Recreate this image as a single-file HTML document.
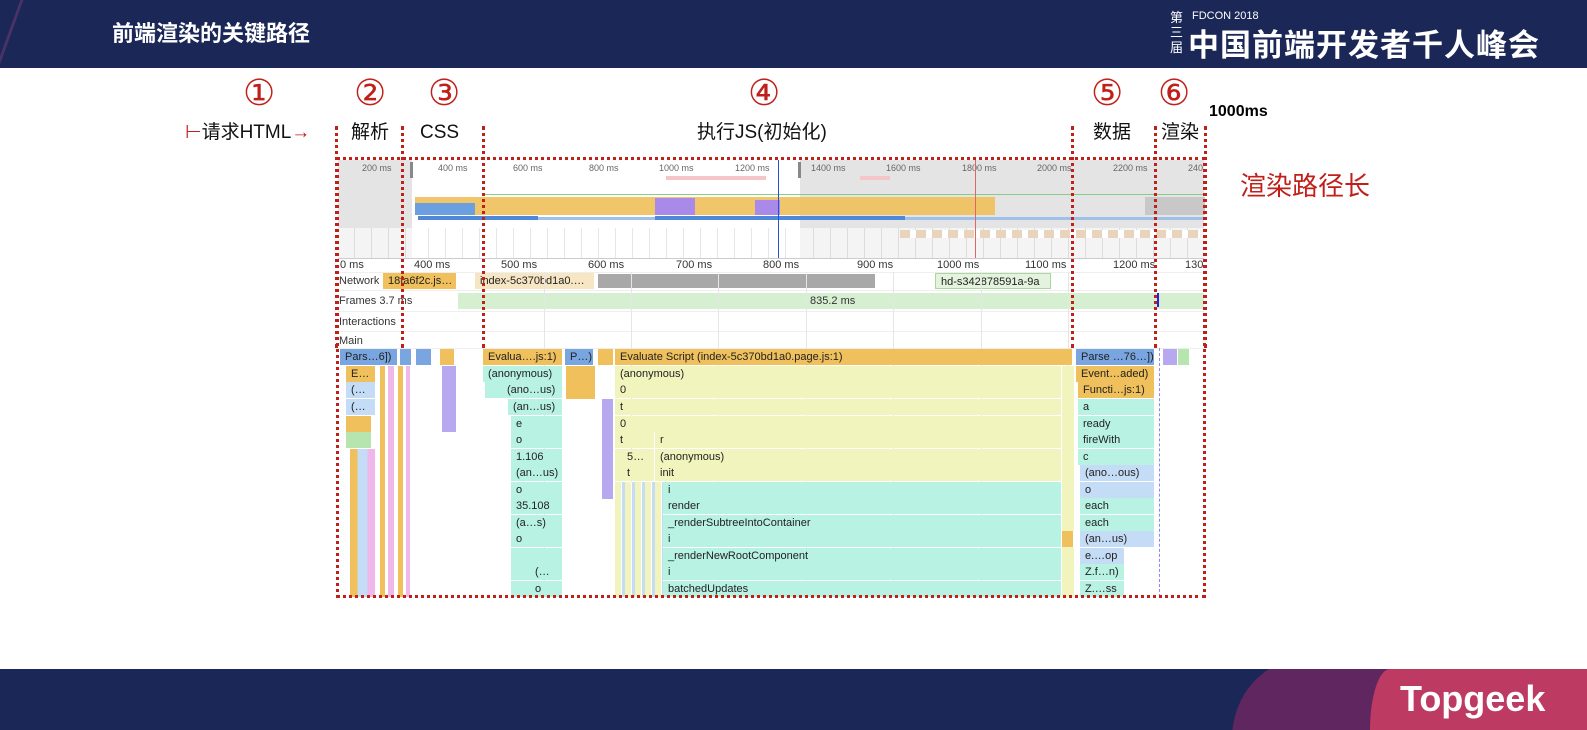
<!DOCTYPE html>
<html><head><meta charset="utf-8">
<style>
*{margin:0;padding:0;box-sizing:border-box}
body{width:1587px;height:730px;position:relative;overflow:hidden;background:#fff;font-family:"Liberation Sans","Noto Sans CJK SC",sans-serif}
.a{position:absolute}
.hdr{left:0;top:0;width:1587px;height:68px;background:#1b2857}
.ftr{left:0;top:669px;width:1587px;height:61px;background:#1b2857;overflow:hidden}
.num{position:absolute;top:74px;font-size:36px;color:#c0201a;font-family:"DejaVu Sans",sans-serif;line-height:40px}
.lbl{position:absolute;top:120px;font-size:19px;color:#111;line-height:26px}
.dl{position:absolute;width:0;border-left:3px dotted #c0201a}
.t{position:absolute;font-size:11px;color:#333;line-height:16px;white-space:nowrap;overflow:hidden}
.s{position:absolute;font-size:9px;color:#666;white-space:nowrap}
.b{position:absolute;height:16px;font-size:11px;line-height:16px;color:#222;padding-left:5px;white-space:nowrap;overflow:hidden;border-right:1px solid #fff}
.o{background:#efc05b}.g{background:#b8f2e2}.y{background:#f2f4bd}.bl{background:#79a5e0}.lb{background:#c4dcf5}.p{background:#b6a9ef}.pk{background:#f0b8ea}.gr{background:#b6e5b0}
.row{position:absolute;left:338px;width:866px;height:1px;background:#eee}
</style></head><body>
<div class="a hdr">
 <div class="a" style="left:8px;top:0;width:3px;height:68px;background:#4a3266;transform:skewX(-20deg)"></div>
 <div class="a" style="left:112px;top:20px;font-size:22px;line-height:28px;font-weight:bold;color:#fff">前端渲染的关键路径</div>
 <div class="a" style="left:1170px;top:10px;font-size:13px;color:#fff;line-height:15px;width:14px">第<br>三<br>届</div>
 <div class="a" style="left:1192px;top:10px;font-size:11px;line-height:13px;color:#fff">FDCON 2018</div>
 <div class="a" style="left:1188px;top:30px;font-size:31px;line-height:32px;font-weight:bold;color:#fff;letter-spacing:1px">中国前端开发者千人峰会</div>
</div>

<div class="num" style="left:243px">①</div>
<div class="num" style="left:354px">②</div>
<div class="num" style="left:428px">③</div>
<div class="num" style="left:748px">④</div>
<div class="num" style="left:1091px">⑤</div>
<div class="num" style="left:1158px">⑥</div>
<div class="lbl" style="left:185px"><span style="color:#c0201a">⊢</span>请求HTML<span style="color:#c0201a">→</span></div>
<div class="lbl" style="left:351px">解析</div>
<div class="lbl" style="left:420px">CSS</div>
<div class="lbl" style="left:697px">执行JS(初始化)</div>
<div class="lbl" style="left:1093px">数据</div>
<div class="lbl" style="left:1161px">渲染</div>
<div class="a" style="left:1209px;top:103px;font-size:16px;font-weight:bold;color:#000">1000ms</div>
<div class="a" style="left:1240px;top:166px;font-size:26px;color:#c0201a">渲染路径长</div>

<!-- devtools -->
<div class="a" style="left:338px;top:160px;width:866px;height:98px;background:#e4e4e4"></div>
<div class="a" style="left:412px;top:160px;width:388px;height:98px;background:#fff"></div>
<div class="a" style="left:410px;top:162px;width:3px;height:16px;background:#888"></div>
<div class="a" style="left:798px;top:162px;width:3px;height:16px;background:#888"></div>
<div class="s" style="left:362px;top:163px">200 ms</div><div class="s" style="left:438px;top:163px">400 ms</div><div class="s" style="left:513px;top:163px">600 ms</div><div class="s" style="left:589px;top:163px">800 ms</div><div class="s" style="left:659px;top:163px">1000 ms</div><div class="s" style="left:735px;top:163px">1200 ms</div><div class="s" style="left:811px;top:163px">1400 ms</div><div class="s" style="left:886px;top:163px">1600 ms</div><div class="s" style="left:962px;top:163px">1800 ms</div><div class="s" style="left:1037px;top:163px">2000 ms</div><div class="s" style="left:1113px;top:163px">2200 ms</div><div class="s" style="left:1188px;top:163px">240</div>
<div class="a" style="left:666px;top:176px;width:100px;height:4px;background:#f5c5c8"></div>
<div class="a" style="left:860px;top:176px;width:30px;height:4px;background:#f5c5c8"></div>
<div class="a" style="left:484px;top:194px;width:720px;height:1px;background:#8c8"></div>
<div class="a" style="left:415px;top:197px;width:580px;height:18px;background:#efc05b;opacity:.9"></div>
<div class="a" style="left:415px;top:203px;width:60px;height:12px;background:#6c9fe0"></div>
<div class="a" style="left:655px;top:198px;width:40px;height:17px;background:#a98ae8"></div>
<div class="a" style="left:755px;top:200px;width:25px;height:15px;background:#a98ae8"></div>
<div class="a" style="left:1145px;top:197px;width:60px;height:18px;background:#c8c8c8"></div>
<div class="a" style="left:418px;top:217px;width:785px;height:3px;background:#9fc0e8"></div>
<div class="a" style="left:418px;top:216px;width:120px;height:4px;background:#4f88d8"></div>
<div class="a" style="left:655px;top:216px;width:250px;height:4px;background:#4f88d8"></div>
<div class="a" style="left:338px;top:228px;width:866px;height:30px;background:repeating-linear-gradient(90deg,#f4f4f4 0 16px,#ddd 16px 17px)"></div>
<div class="a" style="left:412px;top:228px;width:388px;height:30px;background:repeating-linear-gradient(90deg,#fff 0 16px,#e6e6e6 16px 17px)"></div>
<div class="a" style="left:900px;top:230px;width:300px;height:8px;background:repeating-linear-gradient(90deg,#e9d3bd 0 10px,#fff 10px 16px)"></div>
<div class="a" style="left:778px;top:160px;width:1px;height:98px;background:#2350e0"></div>
<div class="a" style="left:975px;top:160px;width:1px;height:98px;background:#d66"></div>
<div class="a" style="left:338px;top:258px;width:866px;height:1px;background:#ccc"></div>
<!-- ruler -->
<div class="t" style="left:340px;top:257px">0 ms</div><div class="t" style="left:414px;top:257px">400 ms</div><div class="t" style="left:501px;top:257px">500 ms</div><div class="t" style="left:588px;top:257px">600 ms</div><div class="t" style="left:676px;top:257px">700 ms</div><div class="t" style="left:763px;top:257px">800 ms</div><div class="t" style="left:857px;top:257px">900 ms</div><div class="t" style="left:937px;top:257px">1000 ms</div><div class="t" style="left:1025px;top:257px">1100 ms</div><div class="t" style="left:1113px;top:257px">1200 ms</div><div class="t" style="left:1185px;top:257px">130</div>
<div class="row" style="top:272px"></div><div class="row" style="top:290px"></div><div class="row" style="top:311px"></div><div class="row" style="top:331px"></div><div class="row" style="top:348px"></div>
<!-- network -->
<div class="b o" style="left:383px;top:273px;width:74px">18fa6f2c.js…</div>
<div class="b" style="left:475px;top:273px;width:120px;background:#f7e6c4">index-5c370bd1a0.…</div>
<div class="b" style="left:598px;top:274px;width:278px;height:14px;background:#a8a8a8"></div>
<div class="b" style="left:935px;top:273px;width:116px;background:#e3f3dd;border:1px solid #aad79f">hd-s342878591a-9a</div>
<div class="t" style="left:339px;top:273px">Network</div>
<!-- frames -->
<div class="a" style="left:458px;top:293px;width:746px;height:16px;background:#d6efd0"></div>
<div class="t" style="left:810px;top:293px">835.2 ms</div>
<div class="t" style="left:339px;top:293px">Frames&nbsp;3.7 ms</div>
<div class="a" style="left:1157px;top:293px;width:2px;height:14px;background:#22e"></div>
<div class="t" style="left:339px;top:314px">Interactions</div>
<div class="t" style="left:339px;top:333px">Main</div>
<!-- grid lines -->
<div class="a" style="left:544px;top:272px;width:1px;height:325px;background:#e6e6e6"></div>
<div class="a" style="left:631px;top:272px;width:1px;height:325px;background:#e6e6e6"></div>
<div class="a" style="left:718px;top:272px;width:1px;height:325px;background:#e6e6e6"></div>
<div class="a" style="left:806px;top:272px;width:1px;height:325px;background:#e6e6e6"></div>
<div class="a" style="left:893px;top:272px;width:1px;height:325px;background:#e6e6e6"></div>
<div class="a" style="left:981px;top:272px;width:1px;height:325px;background:#e6e6e6"></div>
<div class="a" style="left:1068px;top:272px;width:1px;height:325px;background:#e6e6e6"></div>
<!-- flame row0 -->
<div class="b bl" style="left:340px;top:349px;width:58px">Pars…6])</div>
<div class="b bl" style="left:400px;top:349px;width:12px"></div>
<div class="b bl" style="left:416px;top:349px;width:16px"></div>
<div class="b o" style="left:440px;top:349px;width:15px"></div>
<div class="b o" style="left:483px;top:349px;width:80px">Evalua….js:1)</div>
<div class="b bl" style="left:565px;top:349px;width:29px">P…)</div>
<div class="b o" style="left:598px;top:349px;width:16px"></div>
<div class="b o" style="left:615px;top:349px;width:458px">Evaluate Script (index-5c370bd1a0.page.js:1)</div>
<div class="b bl" style="left:1076px;top:349px;width:79px">Parse …76…])</div>
<div class="b p" style="left:1163px;top:349px;width:15px"></div>
<div class="b gr" style="left:1178px;top:349px;width:12px"></div>
<!-- left scraps -->
<div class="b o" style="left:346px;top:366px;width:30px">E…</div>
<div class="b lb" style="left:346px;top:382px;width:30px">(…</div>
<div class="b lb" style="left:346px;top:399px;width:30px">(…</div>
<div class="b o" style="left:346px;top:416px;width:26px"></div>
<div class="b gr" style="left:346px;top:432px;width:26px"></div>
<div class="a" style="left:350px;top:449px;width:25px;height:148px;background:linear-gradient(90deg,#efc05b 0 30%,#c4dcf5 30% 70%,#f0b8ea 70%)"></div>
<div class="a" style="left:380px;top:366px;width:30px;height:231px;background:repeating-linear-gradient(90deg,#efc05b 0 5px,#fff 5px 8px,#f0b8ea 8px 14px,#fff 14px 18px)"></div>
<div class="b p" style="left:442px;top:366px;width:15px;height:66px"></div>
<div class="b o" style="left:566px;top:366px;width:30px;height:33px"></div>
<div class="b p" style="left:602px;top:399px;width:12px;height:100px"></div>
<!-- column A -->
<div class="b g" style="left:483px;top:366px;width:80px">(anonymous)</div>
<div class="b g" style="left:485px;top:382px;width:78px;padding-left:22px">(ano…us)</div>
<div class="b g" style="left:508px;top:399px;width:55px">(an…us)</div>
<div class="b g" style="left:511px;top:416px;width:52px">e</div>
<div class="b g" style="left:511px;top:432px;width:52px">o</div>
<div class="b g" style="left:511px;top:449px;width:52px">1.106</div>
<div class="b g" style="left:511px;top:465px;width:52px">(an…us)</div>
<div class="b g" style="left:511px;top:482px;width:52px">o</div>
<div class="b g" style="left:511px;top:498px;width:52px">35.108</div>
<div class="b g" style="left:511px;top:515px;width:52px">(a…s)</div>
<div class="b g" style="left:511px;top:531px;width:52px">o</div>
<div class="b g" style="left:511px;top:548px;width:52px"></div>
<div class="b g" style="left:511px;top:564px;width:52px;padding-left:24px">(…</div>
<div class="b g" style="left:511px;top:581px;width:52px;padding-left:24px">o</div>
<!-- column B -->
<div class="b y" style="left:615px;top:366px;width:447px">(anonymous)</div>
<div class="b y" style="left:615px;top:382px;width:447px">0</div>
<div class="b y" style="left:615px;top:399px;width:447px">t</div>
<div class="b y" style="left:615px;top:416px;width:447px">0</div>
<div class="b y" style="left:615px;top:432px;width:40px">t</div>
<div class="b y" style="left:655px;top:432px;width:407px">r</div>
<div class="b y" style="left:615px;top:449px;width:40px;padding-left:12px">5…</div>
<div class="b y" style="left:655px;top:449px;width:407px">(anonymous)</div>
<div class="b y" style="left:615px;top:465px;width:40px;padding-left:12px">t</div>
<div class="b y" style="left:655px;top:465px;width:407px">init</div>
<div class="a" style="left:615px;top:482px;width:48px;height:115px;background:repeating-linear-gradient(90deg,#f2f4bd 0 6px,#fff 6px 7px,#c4dcf5 7px 10px)"></div>
<div class="b g" style="left:663px;top:482px;width:399px">i</div>
<div class="b g" style="left:663px;top:498px;width:399px">render</div>
<div class="b g" style="left:663px;top:515px;width:399px">_renderSubtreeIntoContainer</div>
<div class="b g" style="left:663px;top:531px;width:399px">i</div>
<div class="b g" style="left:663px;top:548px;width:399px">_renderNewRootComponent</div>
<div class="b g" style="left:663px;top:564px;width:399px">i</div>
<div class="b g" style="left:663px;top:581px;width:399px">batchedUpdates</div>
<div class="a" style="left:1062px;top:366px;width:12px;height:231px;background:#f2f4bd"></div>
<div class="b o" style="left:1062px;top:531px;width:12px"></div>
<!-- right col -->
<div class="b o" style="left:1076px;top:366px;width:79px">Event…aded)</div>
<div class="b o" style="left:1078px;top:382px;width:77px">Functi…js:1)</div>
<div class="b g" style="left:1078px;top:399px;width:77px">a</div>
<div class="b g" style="left:1078px;top:416px;width:77px">ready</div>
<div class="b g" style="left:1078px;top:432px;width:77px">fireWith</div>
<div class="b g" style="left:1078px;top:449px;width:77px">c</div>
<div class="b lb" style="left:1080px;top:465px;width:75px">(ano…ous)</div>
<div class="b lb" style="left:1080px;top:482px;width:75px">o</div>
<div class="b g" style="left:1080px;top:498px;width:75px">each</div>
<div class="b g" style="left:1080px;top:515px;width:75px">each</div>
<div class="b lb" style="left:1080px;top:531px;width:75px">(an…us)</div>
<div class="b lb" style="left:1080px;top:548px;width:45px">e.…op</div>
<div class="b g" style="left:1080px;top:564px;width:45px">Z.f…n)</div>
<div class="b g" style="left:1080px;top:581px;width:45px">Z.…ss</div>
<div class="a" style="left:1159px;top:348px;width:0;height:249px;border-left:1px dashed #88f"></div>

<!-- red box + dotted lines -->
<div class="a" style="left:336px;top:157px;width:870px;height:441px;border:3px dotted #c0201a"></div>
<div class="dl" style="left:335px;top:126px;height:222px"></div>
<div class="dl" style="left:401px;top:126px;height:222px"></div>
<div class="dl" style="left:482px;top:126px;height:222px"></div>
<div class="dl" style="left:1071px;top:126px;height:222px"></div>
<div class="dl" style="left:1154px;top:126px;height:222px"></div>
<div class="dl" style="left:1204px;top:126px;height:222px"></div>

<div class="a ftr">
 <div class="a" style="left:1232px;top:-10px;width:180px;height:80px;background:#5f2660;border-radius:40% 0 0 0/100% 0 0 0"></div>
 <div class="a" style="left:1370px;top:0;width:217px;height:61px;background:#bd3a62;border-radius:20px 0 0 0/61px 0 0 0"></div>
 <div class="a" style="left:1400px;top:10px;font-size:36px;line-height:40px;font-weight:bold;color:#fff;letter-spacing:0">Topgeek</div>
</div>
</body></html>
